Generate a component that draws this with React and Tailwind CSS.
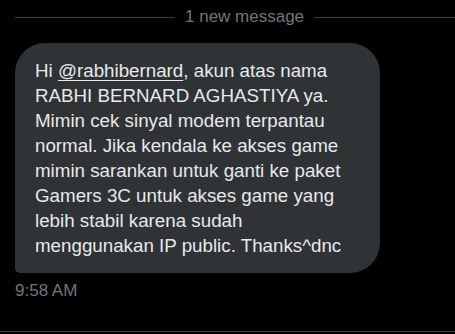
export default function App() {
  const lines = [
    "RABHI BERNARD AGHASTIYA ya.",
    "Mimin cek sinyal modem terpantau",
    "normal. Jika kendala ke akses game",
    "mimin sarankan untuk ganti ke paket",
    "Gamers 3C untuk akses game yang",
    "lebih stabil karena sudah",
    "menggunakan IP public. Thanks^dnc",
  ];
  return (
    <div className="w-[455px] h-[334px] bg-black overflow-hidden flex flex-col font-['Liberation_Sans',Arial,sans-serif]">
      <div className="flex items-center h-[34px] pl-[15px] -mr-[20px] shrink-0">
        <div className="w-[160px] h-px bg-[#3a3d40]" />
        <span className="mx-[10px] text-[17px] leading-[20px] text-[#71767b] whitespace-nowrap">1 new message</span>
        <div className="flex-1 h-px bg-[#3a3d40]" />
      </div>
      <div className="ml-[15px] mt-[9px] w-[365px] bg-[#2f3336] rounded-[30px] rounded-bl-[5px] px-5 py-[15px] text-[18.75px] leading-[25px] text-[#e7e9ea] shrink-0">
        <div className="whitespace-nowrap">
          Hi <span className="underline underline-offset-[3px]">@rabhibernard</span>, akun atas nama
        </div>
        {lines.map((l) => (
          <div key={l} className="whitespace-nowrap">{l}</div>
        ))}
      </div>
      <div className="pl-[15px] mt-[8px] text-[17px] leading-[20px] text-[#71767b]">9:58 AM</div>
      <div className="mt-auto mb-[2px] h-px bg-[#3e4144] shrink-0" />
    </div>
  );
}
